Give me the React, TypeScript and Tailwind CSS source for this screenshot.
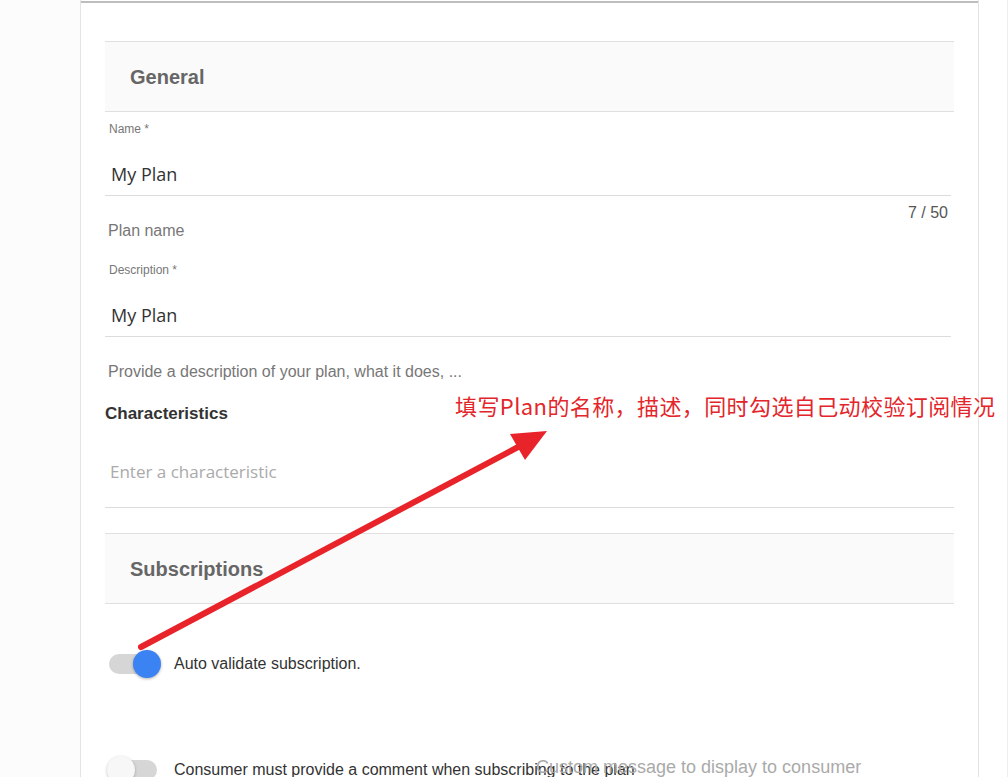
import React from 'react';

const sans = { fontFamily: '"Liberation Sans", Arial, sans-serif' };

function SectionHeader({ title }: { title: string }) {
    return (
        <div className="h-[71px] border-y border-[#e0e0e0] bg-[#fafafa] flex items-center pl-[25px]">
            <span className="text-[20px] font-bold text-[#666]" style={sans}>
                {title}
            </span>
        </div>
    );
}

function TextField({ label, value, helper, counter }: { label: string; value: string; helper: string; counter?: string }) {
    return (
        <div className="pr-[3px]">
            <div className="h-[20px] leading-[20px] pl-[4px] text-[12px] text-[#777]" style={sans}>
                {label}
            </div>
            <div
                className="mt-[14px] h-[43px] flex items-center pl-[6px] border-b border-[#dcdcdc] text-[18px] text-[#333]"
                style={{ fontFamily: '"Open Sans", sans-serif' }}
            >
                {value}
            </div>
            <div className="h-[25px] pt-[8px] pr-[3px] text-right text-[16px] leading-[18px] text-[#555]" style={sans}>
                {counter}
            </div>
            <div className="h-[20px] leading-[20px] pl-[3px] text-[16px] text-[#777]" style={sans}>
                {helper}
            </div>
        </div>
    );
}

function Toggle({ on }: { on: boolean }) {
    return (
        <div className="relative w-[54px] h-[28px] flex items-center">
            <div className="ml-[2px] w-[48px] h-[20px] rounded-full bg-[#d6d6d6]" />
            <div
                className={
                    on
                        ? 'absolute left-[26px] w-[28px] h-[28px] rounded-full bg-[#3b82f2] shadow-[0_1px_3px_rgba(0,0,0,0.3)]'
                        : 'absolute left-0 w-[28px] h-[28px] rounded-full bg-[#f7f7f7] shadow-[0_1px_3px_rgba(0,0,0,0.25)]'
                }
            />
        </div>
    );
}

// red note drawn on top of the screenshot
function Annotation() {
    return (
        <div className="absolute inset-0 pointer-events-none">
            <div
                className="absolute left-[455px] top-[390px] text-[22px] tracking-[0.4px] leading-[30px] text-[#e3262b] whitespace-nowrap"
                style={{ fontFamily: '"Noto Sans CJK SC", "Noto Sans", sans-serif' }}
            >
                填写Plan的名称，描述，同时勾选自己动校验订阅情况
            </div>
            <svg className="absolute left-0 top-0" width="1008" height="777">
                <line x1="141" y1="647" x2="520" y2="446" stroke="#e8232a" strokeWidth="6" strokeLinecap="round" />
                <polygon points="547,431 510,434 525,460" fill="#e8232a" />
            </svg>
        </div>
    );
}

export default function App() {
    return (
        <div className="relative w-[1008px] h-[777px] overflow-hidden bg-white">
            <div className="flex h-full">
                <div className="w-[80px] shrink-0 bg-[#fcfcfc]" />
                <div className="w-[899px] shrink-0 h-full bg-white border-x border-[#e3e3e3]">
                    <div className="mt-[1px] h-[2px] bg-[#bdbdbd]" />
                    <div className="px-[24px] pt-[38px]">
                        <SectionHeader title="General" />
                        <div className="mt-[7px]">
                            <TextField label="Name *" value="My Plan" helper="Plan name" counter="7 / 50" />
                        </div>
                        <div className="mt-[19px]">
                            <TextField label="Description *" value="My Plan" helper="Provide a description of your plan, what it does, ..." />
                        </div>
                        <div className="mt-[22px] h-[20px] leading-[20px] text-[17px] font-bold text-[#333]" style={sans}>
                            Characteristics
                        </div>
                        <div
                            className="h-[84px] pt-[36px] pl-[5px] border-b border-[#dcdcdc] text-[17px] leading-[24px] text-[#aaa]"
                            style={{ fontFamily: '"Open Sans", sans-serif' }}
                        >
                            Enter a characteristic
                        </div>
                        <div className="mt-[25px]">
                            <SectionHeader title="Subscriptions" />
                        </div>
                        <div className="mt-[46px] pl-[2px] flex items-center gap-[13px]">
                            <Toggle on />
                            <span className="text-[16px] text-[#333]" style={sans}>
                                Auto validate subscription.
                            </span>
                        </div>
                        <div className="relative mt-[78px] pl-[2px] flex items-center gap-[13px]">
                            <Toggle on={false} />
                            <span className="text-[16px] text-[#333]" style={sans}>
                                Consumer must provide a comment when subscribing to the plan
                            </span>
                            <span className="absolute left-[431px] -top-[2px] text-[18px] text-[#aaa]" style={sans}>
                                Custom message to display to consumer
                            </span>
                        </div>
                    </div>
                </div>
                <div className="flex-1 bg-white border-r border-[#eeeeee]" />
            </div>
            <Annotation />
        </div>
    );
}
